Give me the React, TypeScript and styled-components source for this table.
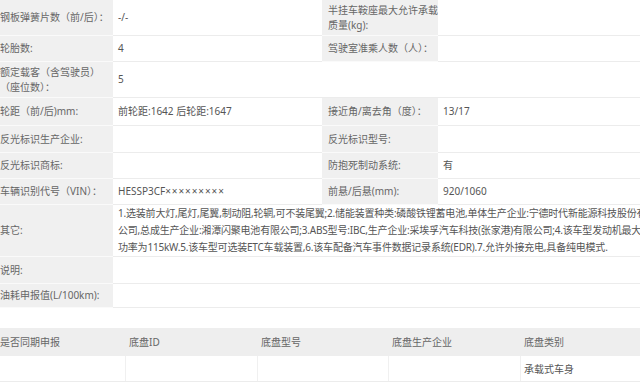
import React from "react";
import styled, { createGlobalStyle } from "styled-components";

const GlobalStyle = createGlobalStyle`
  html, body {
    margin: 0;
    padding: 0;
    background: #ffffff;
    overflow: hidden;
  }
  body {
    font-family: "Noto Sans", "Noto Sans CJK SC", sans-serif;
  }
`;

const Page = styled.div`
  width: 646px;
  margin-left: -6px;
  font-size: 10px;
  color: #555555;
`;

const ParamTable = styled.div`
  display: flex;
  flex-direction: column;
`;

const Row = styled.div<{ $h: number }>`
  display: grid;
  grid-template-columns: 119px 209px 116px 1fr;
  height: ${(p) => p.$h}px;
`;

const Label = styled.div<{ $blank?: boolean }>`
  display: flex;
  align-items: center;
  padding: 0 4px 0 6px;
  line-height: 15px;
  color: #666666;
  background: ${(p) => (p.$blank ? "#ffffff" : "#f0f0f0")};
  border-bottom: 1px solid ${(p) => (p.$blank ? "#ececec" : "#fafafa")};
  white-space: nowrap;
  overflow: hidden;
`;

const Value = styled.div<{ $span?: number }>`
  display: flex;
  align-items: center;
  padding: 0 5px;
  line-height: 15px;
  color: #555555;
  background: #ffffff;
  border-bottom: 1px solid #ececec;
  white-space: nowrap;
  overflow: hidden;
  grid-column: span ${(p) => p.$span ?? 1};
`;

const Masked = styled.span`
  letter-spacing: 0.9px;
`;

const LongText = styled.div`
  display: flex;
  flex-direction: column;
  line-height: 17px;
  letter-spacing: -0.2px;
`;

const Gap = styled.div`
  height: 20px;
`;

const ChassisTable = styled.div`
  display: flex;
  flex-direction: column;
`;

const ChassisRow = styled.div<{ $head?: boolean }>`
  display: grid;
  grid-template-columns: 131px 132px 131px 132px 1fr;
  height: ${(p) => (p.$head ? 28 : 26)}px;
  background: ${(p) => (p.$head ? "#eeeeee" : "#ffffff")};
  border-bottom: 1px solid ${(p) => (p.$head ? "#eeeeee" : "#ececec")};
  box-sizing: border-box;
`;

const ChassisCell = styled.div<{ $head?: boolean }>`
  display: flex;
  align-items: center;
  padding: 0 4px 0 3px;
  color: ${(p) => (p.$head ? "#666666" : "#555555")};
  border-left: 1px solid ${(p) => (p.$head ? "#eeeeee" : "#f0f0f0")};
  white-space: nowrap;
  overflow: hidden;
  &:first-child {
    border-left: none;
    padding-left: 6px;
  }
`;

type ParamRow = {
  h: number;
  l1: React.ReactNode;
  v1?: React.ReactNode;
  l2?: React.ReactNode;
  v2?: string;
  blank?: boolean;
};

const rows: ParamRow[] = [
  {
    h: 36,
    l1: "钢板弹簧片数（前/后）：",
    v1: "-/-",
    l2: (
      <span>
        半挂车鞍座最大允许承载
        <br />
        质量(kg):
      </span>
    ),
  },
  { h: 26, l1: "轮胎数:", v1: "4", l2: "驾驶室准乘人数（人）：" },
  {
    h: 36,
    l1: (
      <span>
        额定载客（含驾驶员）
        <br />
        （座位数）：
      </span>
    ),
    v1: "5",
    blank: true,
  },
  {
    h: 28,
    l1: "轮距（前/后)mm:",
    v1: "前轮距:1642 后轮距:1647",
    l2: "接近角/离去角（度）：",
    v2: "13/17",
  },
  { h: 27, l1: "反光标识生产企业:", l2: "反光标识型号:" },
  { h: 26, l1: "反光标识商标:", l2: "防抱死制动系统:", v2: "有" },
  {
    h: 26,
    l1: "车辆识别代号（VIN）：",
    v1: (
      <span>
        HESSP3CF<Masked>×××××××××</Masked>
      </span>
    ),
    l2: "前悬/后悬(mm):",
    v2: "920/1060",
  },
];

const otherLines = [
  "1.选装前大灯,尾灯,尾翼,制动阻,轮辋,可不装尾翼;2.储能装置种类:磷酸铁锂蓄电池,单体生产企业:宁德时代新能源科技股份有限",
  "公司,总成生产企业:湘潭闪聚电池有限公司;3.ABS型号:IBC,生产企业:采埃孚汽车科技(张家港)有限公司;4.该车型发动机最大净",
  "功率为115kW.5.该车型可选装ETC车载装置,6.该车配备汽车事件数据记录系统(EDR).7.允许外接充电,具备纯电模式.",
];

const chassisHead = ["是否同期申报", "底盘ID", "底盘型号", "底盘生产企业", "底盘类别"];
const chassisBody = ["", "", "", "", "承载式车身"];

const App: React.FC = () => {
  return (
    <Page>
      <GlobalStyle />
      <ParamTable>
        {rows.map((r, i) => (
          <Row key={i} $h={r.h}>
            <Label>{r.l1}</Label>
            <Value>{r.v1}</Value>
            <Label $blank={r.blank}>{r.l2}</Label>
            <Value>{r.v2}</Value>
          </Row>
        ))}
        <Row $h={52}>
          <Label>其它:</Label>
          <Value $span={3}>
            <LongText>
              {otherLines.map((t) => (
                <span key={t}>{t}</span>
              ))}
            </LongText>
          </Value>
        </Row>
        <Row $h={27}>
          <Label>说明:</Label>
          <Value $span={3} />
        </Row>
        <Row $h={24}>
          <Label>油耗申报值(L/100km):</Label>
          <Value $span={3} />
        </Row>
      </ParamTable>
      <Gap />
      <ChassisTable>
        <ChassisRow $head>
          {chassisHead.map((t) => (
            <ChassisCell key={t} $head>
              {t}
            </ChassisCell>
          ))}
        </ChassisRow>
        <ChassisRow>
          {chassisBody.map((t, i) => (
            <ChassisCell key={i}>{t}</ChassisCell>
          ))}
        </ChassisRow>
      </ChassisTable>
    </Page>
  );
};

export default App;
